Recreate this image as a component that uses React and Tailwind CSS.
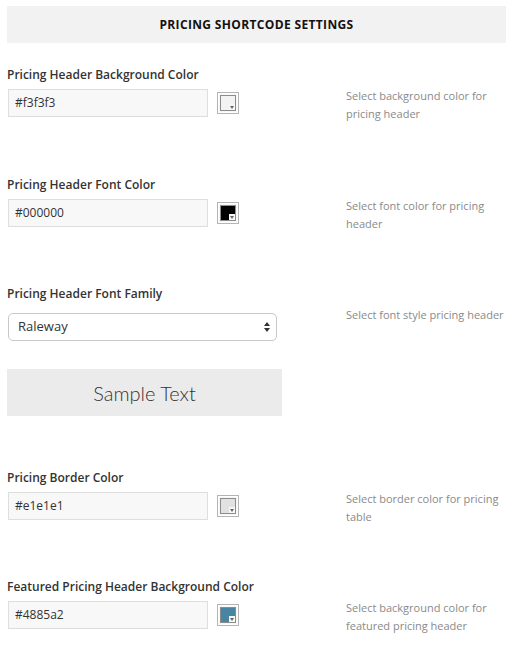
const fields = [
  {
    label: "Pricing Header Background Color",
    value: "#f3f3f3",
    swatch: "#f3f3f3",
    help: ["Select background color for", "pricing header"],
  },
  {
    label: "Pricing Header Font Color",
    value: "#000000",
    swatch: "#000000",
    help: ["Select font color for pricing", "header"],
  },
];

const fields2 = [
  {
    label: "Pricing Border Color",
    value: "#e1e1e1",
    swatch: "#e1e1e1",
    help: ["Select border color for pricing", "table"],
  },
  {
    label: "Featured Pricing Header Background Color",
    value: "#4885a2",
    swatch: "#4885a2",
    help: ["Select background color for", "featured pricing header"],
  },
];

function Swatch({ color }) {
  return (
    <div className="relative ml-[9px] h-[22px] w-[22px] border border-[#b4b4b4] bg-[#f7f7f7] p-[2px] shadow-[inset_0_0_0_1px_#fff]">
      <div
        className="h-full w-full border border-[#8c8c8c]"
        style={{ backgroundColor: color }}
      />
      <div className="absolute bottom-[3px] right-[3px] flex h-[6px] w-[6px] items-end justify-center bg-[#f7f7f7]">
        <div className="mb-[1px] h-0 w-0 border-x-[2px] border-t-[3px] border-x-transparent border-t-[#666]" />
      </div>
    </div>
  );
}

function Help({ lines }) {
  return (
    <div className="whitespace-nowrap pt-[20px] text-[11px] leading-[18px] text-[#8a8a8a]">
      {lines.map((l) => (
        <div key={l}>{l}</div>
      ))}
    </div>
  );
}

function ColorRow({ field, className }) {
  return (
    <div className={"flex " + className}>
      <div className="w-[339px]">
        <div className="text-[12px] font-semibold leading-[16px] text-[#333]">
          {field.label}
        </div>
        <div className="mt-[6px] flex items-center">
          <div className="ml-[1px] flex h-[28px] w-[200px] items-center border border-[#dedede] bg-[#f8f8f8] pl-[6px] text-[12px] text-[#333]">
            {field.value}
          </div>
          <Swatch color={field.swatch} />
        </div>
      </div>
      <Help lines={field.help} />
    </div>
  );
}

export default function App() {
  return (
    <div
      className="min-h-[652px] bg-white pl-[7px] pt-[6px]"
      style={{ fontFamily: '"Open Sans", "Liberation Sans", sans-serif' }}
    >
      <div className="flex h-[37px] w-[499px] items-center justify-center bg-[#f2f2f2] text-[12px] font-bold tracking-[0.35px] text-[#111]">
        PRICING SHORTCODE SETTINGS
      </div>

      <ColorRow field={fields[0]} className="mt-[24px]" />
      <ColorRow field={fields[1]} className="mt-[54px]" />

      <div className="mt-[53px] flex">
        <div className="w-[339px]">
          <div className="text-[12px] font-semibold leading-[16px] text-[#333]">
            Pricing Header Font Family
          </div>
          <div className="ml-[1px] mt-[11px] flex h-[28px] w-[269px] items-center justify-between rounded-[5px] border border-[#c8c8c8] bg-white pl-[9px] pr-[5px] text-[13px] text-[#333]">
            <span>Raleway</span>
            <svg width="8" height="12" viewBox="0 0 8 12">
              <path d="M4 1 L7 5 L1 5 Z" fill="#333" />
              <path d="M4 11 L7 7 L1 7 Z" fill="#333" />
            </svg>
          </div>
        </div>
        <Help lines={["Select font style pricing header"]} />
      </div>

      <div
        className="mt-[28px] flex h-[47px] w-[275px] items-center justify-center bg-[#ebebeb] text-[20px] font-light text-[#333]"
        style={{ fontFamily: "Lato, sans-serif" }}
      >
        Sample Text
      </div>

      <ColorRow field={fields2[0]} className="mt-[54px]" />
      <ColorRow field={fields2[1]} className="mt-[53px]" />
    </div>
  );
}
